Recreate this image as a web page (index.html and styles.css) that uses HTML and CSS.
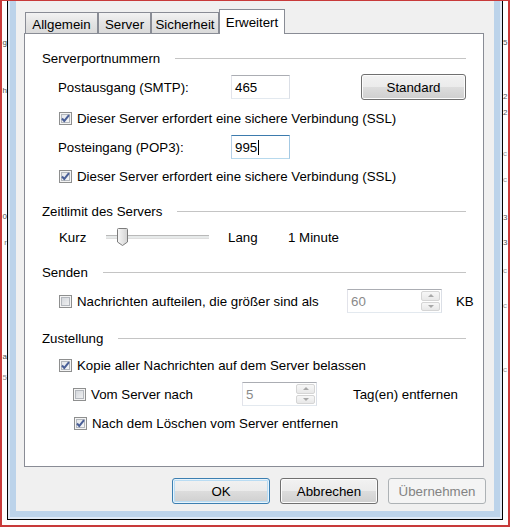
FILE: index.html
```html
<!DOCTYPE html>
<html lang="de">
<head>
  <meta charset="UTF-8" />
  <meta name="viewport" content="width=device-width, initial-scale=1.0" />
  <title>Konto - Erweitert</title>
  <link rel="stylesheet" href="styles.css">
</head>
<body>
<div class="screen">

  <!-- Reste des Fensters dahinter, links -->
  <div class="edge edge-left">
    <div class="frag">g</div>
    <div class="frag">h</div>
    <div class="frag">0</div>
    <div class="frag">r</div>
    <div class="frag">a</div>
    <div class="frag">5</div>
  </div>

  <div class="window">
    <div class="dialog">

      <div class="tabs">
        <span class="tab tab-allgemein">Allgemein</span>
        <span class="tab tab-server">Server</span>
        <span class="tab tab-sicherheit">Sicherheit</span>
        <span class="tab tab-erweitert active">Erweitert</span>
      </div>

      <div class="panel">
        <div class="group-title first">Serverportnummern</div>

        <div class="row port-row smtp">
          <span class="label">Postausgang (SMTP):</span>
          <span class="textbox">465</span>
          <span class="btn btn-standard">Standard</span>
        </div>
        <div class="row check-row after-smtp">
          <span class="check checked"><svg width="11" height="11" viewBox="0 0 11 11"><path d="M2 5.5 L4.3 8 L9 2.2" fill="none" stroke="#4a5f97" stroke-width="2"/></svg></span>
          <span>Dieser Server erfordert eine sichere Verbindung (SSL)</span>
        </div>

        <div class="row port-row">
          <span class="label">Posteingang (POP3):</span>
          <span class="textbox focused">995<i class="caret"></i></span>
        </div>
        <div class="row check-row">
          <span class="check checked"><svg width="11" height="11" viewBox="0 0 11 11"><path d="M2 5.5 L4.3 8 L9 2.2" fill="none" stroke="#4a5f97" stroke-width="2"/></svg></span>
          <span>Dieser Server erfordert eine sichere Verbindung (SSL)</span>
        </div>

        <div class="group-title">Zeitlimit des Servers</div>
        <div class="row slider-row">
          <span class="slider-label">Kurz</span>
          <span class="slider">
            <svg class="thumb" width="11" height="18" viewBox="0 0 11 18">
              <defs>
                <linearGradient id="thumbFill" x1="0" y1="0" x2="1" y2="0">
                  <stop offset="0" stop-color="#f8f8f8"/>
                  <stop offset="1" stop-color="#d3d3d3"/>
                </linearGradient>
              </defs>
              <path d="M1.5 0.5 H9.5 Q10.5 0.5 10.5 1.5 V14 L5.5 17.5 L0.5 14 V1.5 Q0.5 0.5 1.5 0.5 Z" fill="url(#thumbFill)" stroke="#7c7c7c"/>
            </svg>
          </span>
          <span class="slider-lang">Lang</span>
          <span>1 Minute</span>
        </div>

        <div class="group-title">Senden</div>
        <div class="row check-row field-row">
          <span class="check"></span>
          <span class="send-label">Nachrichten aufteilen, die größer sind als</span>
          <span class="spin spin-kb">
            <span class="spin-value">60</span>
            <span class="spin-arrows"><span class="up"></span><span class="down"></span></span>
          </span>
          <span class="unit-kb">KB</span>
        </div>

        <div class="group-title">Zustellung</div>
        <div class="row check-row">
          <span class="check checked"><svg width="11" height="11" viewBox="0 0 11 11"><path d="M2 5.5 L4.3 8 L9 2.2" fill="none" stroke="#4a5f97" stroke-width="2"/></svg></span>
          <span>Kopie aller Nachrichten auf dem Server belassen</span>
        </div>
        <div class="row sub-row field-row">
          <span class="check"></span>
          <span class="days-label">Vom Server nach</span>
          <span class="spin spin-days">
            <span class="spin-value">5</span>
            <span class="spin-arrows"><span class="up"></span><span class="down"></span></span>
          </span>
          <span class="unit-days">Tag(en) entfernen</span>
        </div>
        <div class="row sub-row delete-row">
          <span class="check checked"><svg width="11" height="11" viewBox="0 0 11 11"><path d="M2 5.5 L4.3 8 L9 2.2" fill="none" stroke="#4a5f97" stroke-width="2"/></svg></span>
          <span>Nach dem Löschen vom Server entfernen</span>
        </div>
      </div>

      <div class="buttons">
        <span class="btn dialog-btn default">OK</span>
        <span class="btn dialog-btn">Abbrechen</span>
        <span class="btn dialog-btn disabled">Übernehmen</span>
      </div>

    </div>
  </div>

  <!-- Reste des Fensters dahinter, rechts -->
  <div class="edge edge-right">
    <div class="frag">5</div>
    <div class="frag">2</div>
    <div class="frag">2</div>
    <div class="frag">c</div>
    <div class="frag">c</div>
    <div class="frag">3</div>
    <div class="frag">3</div>
    <div class="frag">c</div>
    <div class="frag">c</div>
    <div class="frag">c</div>
  </div>

</div>
</body>
</html>
```

FILE: styles.css
```css
* {
  box-sizing: border-box;
}

body {
  margin: 0;
  background: #fff;
  font-family: "Liberation Sans", Arial, sans-serif;
  font-size: 13.3px;
  color: #000;
}

.screen {
  display: flex;
  width: 510px;
  height: 527px;
  border: 2px solid #c83a3a;
  border-top-width: 1px;
  background: #fff;
}

/* schmale Streifen links und rechts */
.edge {
  width: 5px;
  flex-shrink: 0;
  overflow: hidden;
  display: flex;
  flex-direction: column;
  font-size: 8px;
  color: #4a4a4a;
}

.edge .frag {
  height: 14px;
  line-height: 14px;
  white-space: nowrap;
  flex-shrink: 0;
}

.edge-left .frag {
  display: flex;
  justify-content: flex-end;
}

.edge-left .frag:nth-child(1) { margin-top: 35px; }
.edge-left .frag:nth-child(2) { margin-top: 34px; }
.edge-left .frag:nth-child(3) { margin-top: 112px; }
.edge-left .frag:nth-child(4) { margin-top: 12px; color: #777; }
.edge-left .frag:nth-child(5) { margin-top: 100px; }
.edge-left .frag:nth-child(6) { margin-top: 7px; color: #888; }

.edge-right .frag {
  color: #555;
}

.edge-right .frag:nth-child(1) { margin-top: 35px; }
.edge-right .frag:nth-child(2) { margin-top: 40px; }
.edge-right .frag:nth-child(3) { margin-top: 2px; }
.edge-right .frag:nth-child(4) { margin-top: 27px; color: #999; }
.edge-right .frag:nth-child(5) { margin-top: 12px; color: #999; }
.edge-right .frag:nth-child(6) { margin-top: 24px; }
.edge-right .frag:nth-child(7) { margin-top: 11px; }
.edge-right .frag:nth-child(8) { margin-top: 14px; color: #999; }
.edge-right .frag:nth-child(9) { margin-top: 21px; color: #999; }
.edge-right .frag:nth-child(10) { margin-top: 50px; color: #999; }

/* Fensterrahmen */
.window {
  width: 496px;
  height: 519px;
  flex-shrink: 0;
  border: 1px solid #000;
  border-top: 0;
  padding: 0 8px 8px;
  background: #bcd3ea;
  box-shadow: inset 2px 0 0 #dfe9f5, inset -2px 0 0 #dfe9f5, inset 0 -2px 0 #dfe9f5;
}

.dialog {
  height: 510px;
  background: #f0f0f0;
  padding: 8px 8px 0;
}

/* Reiter */
.tabs {
  display: flex;
  align-items: flex-end;
  height: 24px;
  padding-left: 1px;
}

.tab {
  display: flex;
  align-items: center;
  justify-content: center;
  flex-shrink: 0;
  height: 21px;
  padding-top: 3px;
  border: 1px solid #898c95;
  border-bottom: 0;
  background: linear-gradient(#f3f3f3, #e4e4e4 50%, #dadada);
}

.tab-allgemein { width: 73px; }
.tab-server { width: 53px; }
.tab-sicherheit { width: 68px; }
.tab-erweitert { width: 66px; }

.tab.active {
  height: 25px;
  padding-top: 1px;
  margin-bottom: -1px;
  background: #fff;
  position: relative;
  z-index: 1;
}

.panel {
  width: 460px;
  height: 434px;
  border: 1px solid #898c95;
  background: #fff;
  padding: 14px 17px 0;
}

.group-title {
  display: flex;
  align-items: center;
  height: 20px;
  margin-top: 15px;
}

.group-title.first {
  margin-top: 0;
}

.group-title::after {
  content: "";
  flex: 1;
  border-top: 1px solid #c4c4c4;
  margin-left: 15px;
}

.row {
  display: flex;
  align-items: center;
  height: 20px;
  margin-top: 7px;
}

.row > * {
  flex-shrink: 0;
}

.port-row {
  height: 24px;
  padding-left: 16px;
}

.port-row.smtp {
  height: 26px;
  margin-top: 6px;
}

.after-smtp {
  margin-top: 8px;
}

.port-row .label {
  width: 173px;
}

.textbox {
  display: flex;
  align-items: center;
  width: 59px;
  height: 24px;
  padding-left: 3px;
  border: 1px solid;
  border-color: #abadb3 #dbdfe6 #e3e9ef #e2e3ea;
  background: #fff;
}

.textbox.focused {
  border-color: #3d7bad #a4c9e3 #b7d9ed #b5cfe7;
}

.caret {
  width: 1px;
  height: 15px;
  margin-left: 1px;
  background: #000;
}

.check-row {
  padding-left: 17px;
}

.field-row {
  height: 24px;
}

.sub-row {
  padding-left: 31px;
}

.delete-row {
  padding-left: 32px;
}

.check {
  display: flex;
  align-items: center;
  justify-content: center;
  width: 13px;
  height: 13px;
  margin-right: 5px;
  border: 1px solid #8e8f8f;
  background: linear-gradient(135deg, #cdd1d7, #f6f6f6);
  box-shadow: inset 0 0 0 1px #f4f4f4, inset 0 0 0 2px #b3b7bd;
}

.check.checked {
  background: linear-gradient(135deg, #dfe2e6, #fbfbfb);
}

/* Schieberegler */
.slider-row {
  padding-left: 17px;
  margin-top: 6px;
}

.slider-label {
  width: 47px;
}

.slider {
  display: flex;
  align-items: center;
  width: 103px;
  height: 20px;
  margin-right: 19px;
  background: linear-gradient(to bottom,
    transparent 8px, #b9b9b9 8px, #b9b9b9 9px,
    #e7eaea 9px, #e7eaea 11px, #dedede 11px, #dedede 12px, transparent 12px);
}

.thumb {
  margin-left: 11px;
}

.slider-lang {
  width: 60px;
}

/* Drehfelder */
.send-label {
  width: 270px;
}

.days-label {
  width: 151px;
}

.spin {
  display: flex;
  height: 24px;
  padding: 1px 1px 1px 3px;
  border: 1px solid;
  border-color: #abadb3 #dbdfe6 #e3e9ef #e2e3ea;
  background: #fff;
}

.spin-kb { width: 95px; }
.spin-days { width: 75px; }

.spin-value {
  flex: 1;
  display: flex;
  align-items: center;
  color: #8a8a8a;
}

.spin-arrows {
  display: flex;
  flex-direction: column;
  gap: 1px;
  width: 19px;
}

.spin-arrows span {
  flex: 1;
  display: flex;
  align-items: center;
  justify-content: center;
  border: 1px solid #d5d5d5;
  border-radius: 2px;
  background: linear-gradient(#f7f7f7, #e8e8e8);
}

.spin-arrows .up::before,
.spin-arrows .down::before {
  content: "";
  border-left: 3px solid transparent;
  border-right: 3px solid transparent;
}

.spin-arrows .up::before {
  border-bottom: 3px solid #a8a8a8;
}

.spin-arrows .down::before {
  border-top: 3px solid #a8a8a8;
}

.unit-kb {
  margin-left: 14px;
}

.unit-days {
  margin-left: 36px;
}

/* Schaltflächen */
.btn {
  display: flex;
  align-items: center;
  justify-content: center;
  height: 26px;
  border: 1px solid #707070;
  border-radius: 3px;
  background: linear-gradient(#f2f2f2, #ebebeb 50%, #dddddd 50%, #cfcfcf);
  box-shadow: inset 0 0 0 1px #fcfcfc;
}

.btn-standard {
  width: 105px;
  margin-left: auto;
}

.buttons {
  display: flex;
  justify-content: flex-end;
  gap: 10px;
  margin-top: 11px;
}

.dialog-btn {
  width: 98px;
}

.btn.default {
  border-color: #3c7fb1;
  box-shadow: inset 0 0 0 1px #e8f4fc, inset 0 0 0 2px #b9dcf3;
}

.btn.disabled {
  border-color: #adb2b5;
  background: #f4f4f4;
  box-shadow: none;
  color: #838383;
}
```
